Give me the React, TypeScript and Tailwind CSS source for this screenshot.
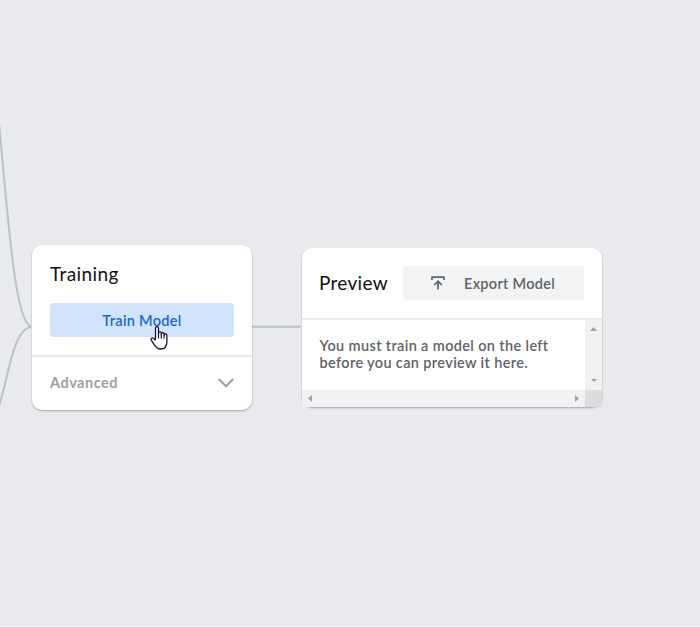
function ExportIcon() {
  return (
    <svg width="14" height="14" viewBox="0 0 14 14" fill="none" stroke="#5f6368" strokeWidth="1.7">
      <path d="M1 4V1.1H13V4" strokeLinejoin="round" />
      <path d="M7 13.6V5.4" />
      <path d="M3.2 9L7 5.2L10.8 9" />
    </svg>
  );
}

function Connectors() {
  return (
    <svg className="absolute inset-0" width="700" height="627" fill="none" stroke="#bdc1c6" strokeWidth="2">
      <path d="M-2 112C9 230 15 320 31 326.8" />
      <path d="M-1 406C9 375 13 330 31 326.8" />
      <path d="M250 326.8H300.5" />
    </svg>
  );
}

function HandCursor() {
  return (
    <svg className="absolute left-[150px] top-[325px]" width="20" height="26" viewBox="0 0 20 26">
      <path
        d="M5.5 14.5V3.2C5.5 1.2 8.5 1.2 8.5 3.2V9.2V7.8C8.5 6.5 11.3 6.5 11.3 8V9.5V8.7C11.3 7.4 14.1 7.4 14.1 9V10.3V9.8C14.1 8.6 16.9 8.6 16.9 10.4V16.5C16.9 21 14.7 24 10.6 24C7 24 5.8 22 4.2 19.6L1.4 15.3C.3 13.4 2.2 12.2 3.6 13.3L5.5 15.2"
        fill="white"
        stroke="#17132b"
        strokeWidth="1.3"
        strokeLinejoin="round"
      />
      <path d="M8.5 9V13.5M11.3 9V13.5M14.1 10V13.5" stroke="#17132b" strokeWidth="1.2" />
    </svg>
  );
}

function TrainingCard() {
  return (
    <section className="relative mt-[244.5px] h-[165px] w-[220px] rounded-[10px] bg-white shadow-[0_1px_2px_rgba(60,64,67,0.4)]">
      <div className="h-[110.5px] px-[18px] pt-[17.5px]">
        <h2 className="text-[19px] leading-6 font-normal tracking-[0.4px] text-[#111]">Training</h2>
        <button className="mt-[17px] flex h-[34px] w-full items-center justify-center rounded-[3px] bg-[#d2e3fc] pt-px text-[14.5px] font-semibold tracking-[0.3px] text-[#1967d2]">
          Train Model
        </button>
      </div>
      <div className="flex h-[54px] items-center justify-between border-t-2 border-[#e8eaed] px-[18px] text-[14.5px] font-bold text-[#9aa0a6]">
        <span className="tracking-[0.5px]">Advanced</span>
        <svg width="16" height="10" viewBox="0 0 16 10" fill="none" stroke="#9aa0a6" strokeWidth="2">
          <path d="M.7 1L8 8.3L15.3 1" />
        </svg>
      </div>
    </section>
  );
}

function PreviewCard() {
  return (
    <section className="relative mt-[247.5px] h-[159.5px] w-[300px] rounded-[10px] bg-white shadow-[0_1px_2px_rgba(60,64,67,0.4)]">
      <header className="flex h-[70.5px] items-center justify-between px-[18px]">
        <h2 className="-ml-px pt-px text-[19px] leading-6 tracking-[0.3px] text-[#111]">Preview</h2>
        <button className="flex h-[34px] w-[181px] items-center rounded-[3px] bg-[#f1f3f4] pl-7 text-[14.5px] font-semibold tracking-[0.3px] text-[#5f6368]">
          <ExportIcon />
          <span className="ml-[19px] pt-[2px]">Export Model</span>
        </button>
      </header>
      <div className="grid h-[89px] grid-cols-[1fr_17px] grid-rows-[1fr_17px] border-t-2 border-[#e8eaed]">
        <p className="pt-[17px] pl-[17.5px] text-[14.5px] leading-[17px] font-semibold tracking-[0.36px] whitespace-nowrap text-[#5f6368]">
          You must train a model on the left
          <br />
          before you can preview it here.
        </p>
        <div className="flex flex-col items-center justify-between bg-[#f1f1f1] pt-[7px] pb-2">
          <svg width="7" height="4" viewBox="0 0 7 4" fill="#a3a3a3"><path d="M0 4L3.5 0L7 4Z" /></svg>
          <svg width="6" height="3" viewBox="0 0 6 3" fill="#a3a3a3"><path d="M0 0H6L3 3Z" /></svg>
        </div>
        <div className="flex items-center justify-between bg-[#f1f1f1] pr-[6.5px] pl-[6px]">
          <svg width="4" height="7" viewBox="0 0 4 7" fill="#a3a3a3"><path d="M4 0L0 3.5L4 7Z" /></svg>
          <svg width="4" height="7" viewBox="0 0 4 7" fill="#a3a3a3"><path d="M0 0L4 3.5L0 7Z" /></svg>
        </div>
        <div className="bg-[#dcdcdc]" />
      </div>
    </section>
  );
}

export default function App() {
  return (
    <main className="relative flex h-[627px] w-[700px] items-start gap-[50px] overflow-hidden border-b border-[#f6f7f8] bg-[#e8eaed] pl-8 font-['Lato','Open_Sans',sans-serif]">
      <Connectors />
      <TrainingCard />
      <PreviewCard />
      <HandCursor />
    </main>
  );
}
